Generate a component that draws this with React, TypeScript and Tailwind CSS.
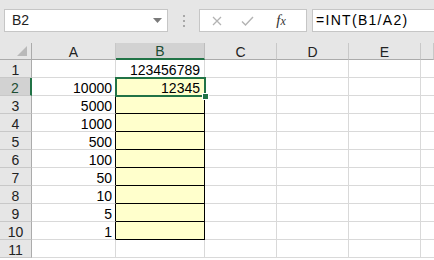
import React from "react";

const colClass = "grid-cols-[32px_84px_89px_72px_72px_72px_1fr]";

const aValues: Record<number, string> = {
  2: "10000",
  3: "5000",
  4: "1000",
  5: "500",
  6: "100",
  7: "50",
  8: "10",
  9: "5",
  10: "1",
};

const bValues: Record<number, string> = {
  1: "123456789",
  2: "12345",
};

const rows = [1, 2, 3, 4, 5, 6, 7, 8, 9, 10, 11];

function Toolbar() {
  return (
    <div className="h-[43px] bg-[#e6e6e6] flex items-start pt-[9px] pl-[4px]">
      {/* Name box */}
      <div className="w-[164px] h-[23px] bg-white border border-[#c6c6c6] flex items-center justify-between pl-[7px] pr-[5px]">
        <span className="text-[14px] text-[#222]">B2</span>
        <svg width="9" height="5" viewBox="0 0 9 5">
          <path d="M0 0 L9 0 L4.5 5 Z" fill="#7a7a7a" />
        </svg>
      </div>
      {/* grip dots */}
      <div className="w-[31px] h-[23px] flex flex-col items-center justify-center gap-[3px]">
        <span className="w-[2px] h-[2px] bg-[#a8a8a8]" />
        <span className="w-[2px] h-[2px] bg-[#a8a8a8]" />
        <span className="w-[2px] h-[2px] bg-[#a8a8a8]" />
      </div>
      {/* cancel / enter / fx */}
      <div className="w-[108px] h-[23px] bg-white border border-[#c6c6c6] flex items-center">
        <div className="w-[30px] flex justify-center ml-[2px]">
          <svg width="10" height="10" viewBox="0 0 10 10">
            <path d="M1 1 L9 9 M9 1 L1 9" stroke="#b3b3b3" strokeWidth="1.3" />
          </svg>
        </div>
        <div className="w-[30px] flex justify-center">
          <svg width="13" height="10" viewBox="0 0 13 10">
            <path d="M1 5.5 L4.5 9 L12 1" stroke="#b3b3b3" strokeWidth="1.4" fill="none" />
          </svg>
        </div>
        <div className="flex-1 flex justify-center pr-[6px]">
          <span className="text-[15px] italic text-[#333] font-['Liberation_Serif',serif] leading-none">
            f<span className="text-[12px]">x</span>
          </span>
        </div>
      </div>
      {/* formula input */}
      <div className="ml-[5px] flex-1 h-[23px] bg-white border border-[#c6c6c6] border-r-0 flex items-center pl-[3px]">
        <span className="text-[14px] text-black tracking-[1.3px]">=INT(B1/A2)</span>
      </div>
    </div>
  );
}

function HeaderRow() {
  const letters = ["A", "B", "C", "D", "E", ""];
  return (
    <>
      <div className="h-[17px] bg-[#e6e6e6] border-r border-b border-[#ababab] flex items-end justify-end pr-[4px] pb-[3px]">
        <svg width="10" height="10" viewBox="0 0 10 10">
          <path d="M10 0 L10 10 L0 10 Z" fill="#b9b9b9" />
        </svg>
      </div>
      {letters.map((l) =>
        l === "B" ? (
          <div
            key="B"
            className="h-[17px] bg-[#d2d2d2] border-r border-[#bdbdbd] border-b-2 border-b-[#217346] flex items-center justify-center text-[14px] text-[#1d4d33] leading-none pt-[1px]"
          >
            B
          </div>
        ) : (
          <div
            key={l || "F"}
            className="h-[17px] bg-[#e6e6e6] border-r border-[#c8c8c8] border-b border-b-[#ababab] flex items-center justify-center text-[14px] text-[#222] leading-none pt-[2px]"
          >
            {l}
          </div>
        )
      )}
    </>
  );
}

function SheetRow({ r }: { r: number }) {
  const inRange = r >= 2 && r <= 10;
  const selected = r === 2;
  return (
    <>
      <div
        className={`h-[18px] border-b border-[#c8c8c8] flex items-center justify-center text-[14px] leading-none pt-[2px] ${
          selected
            ? "bg-[#d2d2d2] border-r-2 border-r-[#217346] text-[#1d4d33]"
            : "bg-[#e6e6e6] border-r border-r-[#ababab] text-[#222]"
        }`}
      >
        {r}
      </div>
      <div
        className={`h-[18px] bg-white border-b border-[#d9d9d9] flex items-center justify-end pr-[3px] pt-[2px] text-[14px] leading-none text-black ${
          inRange ? "border-r border-r-black" : "border-r border-r-[#d9d9d9]"
        }`}
      >
        {aValues[r]}
      </div>
      <div
        className={`h-[18px] flex items-center justify-end pr-[4px] pt-[2px] text-[14px] leading-none text-black ${
          inRange
            ? "bg-[#ffffcc] border-r border-b border-black"
            : r === 1
            ? "bg-white border-r border-[#d9d9d9] border-b border-b-black"
            : "bg-white border-r border-b border-[#d9d9d9]"
        }`}
      >
        {bValues[r]}
      </div>
      <div className="h-[18px] bg-white border-r border-b border-[#d9d9d9]" />
      <div className="h-[18px] bg-white border-r border-b border-[#d9d9d9]" />
      <div className="h-[18px] bg-white border-r border-b border-[#d9d9d9]" />
      <div className="h-[18px] bg-white border-b border-[#d9d9d9]" />
    </>
  );
}

export default function App() {
  return (
    <div className="w-[434px] h-[260px] overflow-hidden bg-white font-['Liberation_Sans','Noto_Sans_CJK_JP',sans-serif]">
      <Toolbar />
      <div className="relative">
        <div className={`grid ${colClass}`}>
          <HeaderRow />
          {rows.map((r) => (
            <SheetRow key={r} r={r} />
          ))}
        </div>
        {/* active cell selection */}
        <div className="absolute left-[115px] top-[34px] w-[91px] h-[20px] border-2 border-[#217346] pointer-events-none" />
        <div className="absolute left-[202px] top-[50px] w-[7px] h-[7px] bg-[#217346] border border-white pointer-events-none" />
      </div>
    </div>
  );
}
